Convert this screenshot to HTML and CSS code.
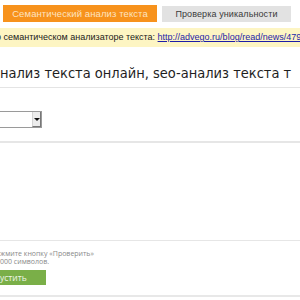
FILE: index.html
```html
<!DOCTYPE html>
<html lang="ru">
<head>
  <meta charset="UTF-8">
  <title>Семантический анализ текста</title>
  <link rel="stylesheet" href="styles.css">
</head>
<body>
  <div class="page">
    <div class="tabs">
      <span class="tab tab-active">Семантический анализ текста</span>
      <span class="tab">Проверка уникальности</span>
    </div>
    <div class="notice">
      о семантическом анализаторе текста: <a href="#">http://advego.ru/blog/read/news/4795/</a>
    </div>
    <h1 class="title">нализ текста онлайн, seo-анализ текста т</h1>
    <div class="options">
      <div class="lang">
        <span class="lang-arrow"></span>
      </div>
    </div>
    <div class="textbox"></div>
    <div class="hint">
      <p>жмите кнопку «Проверить»</p>
      <p>000 символов.</p>
      <button class="run">устить</button>
    </div>
  </div>
</body>
</html>
```

FILE: styles.css
```css
body {
  margin: 0;
  background: #fff;
  font-family: "Liberation Sans", Arial, sans-serif;
  overflow: hidden;
}

.page {
  width: 300px;
  height: 300px;
  overflow: hidden;
}

.tabs {
  display: flex;
  gap: 5px;
  padding: 5px 0 0 3px;
  height: 17px;
}

.tab {
  display: flex;
  align-items: center;
  justify-content: center;
  flex-shrink: 0;
  width: 129px;
  height: 16px;
  margin-top: 1px;
  background: #e2e2e2;
  color: #3a3a3a;
  font-size: 9px;
  letter-spacing: 0.1px;
}

.tab-active {
  width: 154px;
  height: 17px;
  margin-top: 0;
  background: #f7921c;
  color: #fde3c0;
  font-size: 9.5px;
}

.notice {
  margin-top: 6px;
  height: 19px;
  line-height: 19px;
  background: #fdf5c3;
  color: #1a1a1a;
  font-size: 9px;
  white-space: nowrap;
  margin-left: -4px;
}

.notice a {
  color: #1d1da8;
}

.title {
  margin: 15px 0 0;
  height: 25px;
  line-height: 22px;
  border-bottom: 1px solid #e4e4e4;
  font-family: "DejaVu Sans Condensed", "DejaVu Sans", sans-serif;
  font-stretch: condensed;
  font-size: 14.5px;
  font-weight: normal;
  color: #1e1e1e;
  white-space: nowrap;
}

.options {
  height: 55px;
  padding-top: 23px;
  border-bottom: 2px solid #e6e6e6;
  box-sizing: border-box;
}

.lang {
  display: flex;
  justify-content: flex-end;
  width: 42px;
  height: 17px;
  border: 1px solid #9a9a9a;
  border-left: none;
  box-sizing: border-box;
  background: #fff;
}

.lang-arrow {
  position: relative;
  width: 9px;
  height: 15px;
  background: #ececec;
  border-left: 1px solid #d4d4d4;
  border-right: 1px solid #777;
  border-bottom: 1px solid #777;
  box-sizing: border-box;
}

.lang-arrow::after {
  content: "";
  position: absolute;
  left: 1px;
  top: 6px;
  border-left: 3px solid transparent;
  border-right: 3px solid transparent;
  border-top: 3px solid #111;
}

.textbox {
  height: 97px;
  border-bottom: 1px solid #e6e6e6;
}

.hint {
  height: 56px;
  padding-top: 9px;
  border-bottom: 2px solid #e8e8e8;
  box-sizing: border-box;
  font-family: "Open Sans", sans-serif;
  font-size: 7px;
  color: #8a8a8a;
}

.hint p {
  margin: 0;
  line-height: 8px;
}

.run {
  display: block;
  margin-top: 4px;
  width: 46px;
  height: 15px;
  border: none;
  padding: 0;
  background: #7aaf48;
  color: #f0f6e8;
  font-family: "Open Sans", sans-serif;
  font-size: 8.5px;
  text-align: left;
}
```
